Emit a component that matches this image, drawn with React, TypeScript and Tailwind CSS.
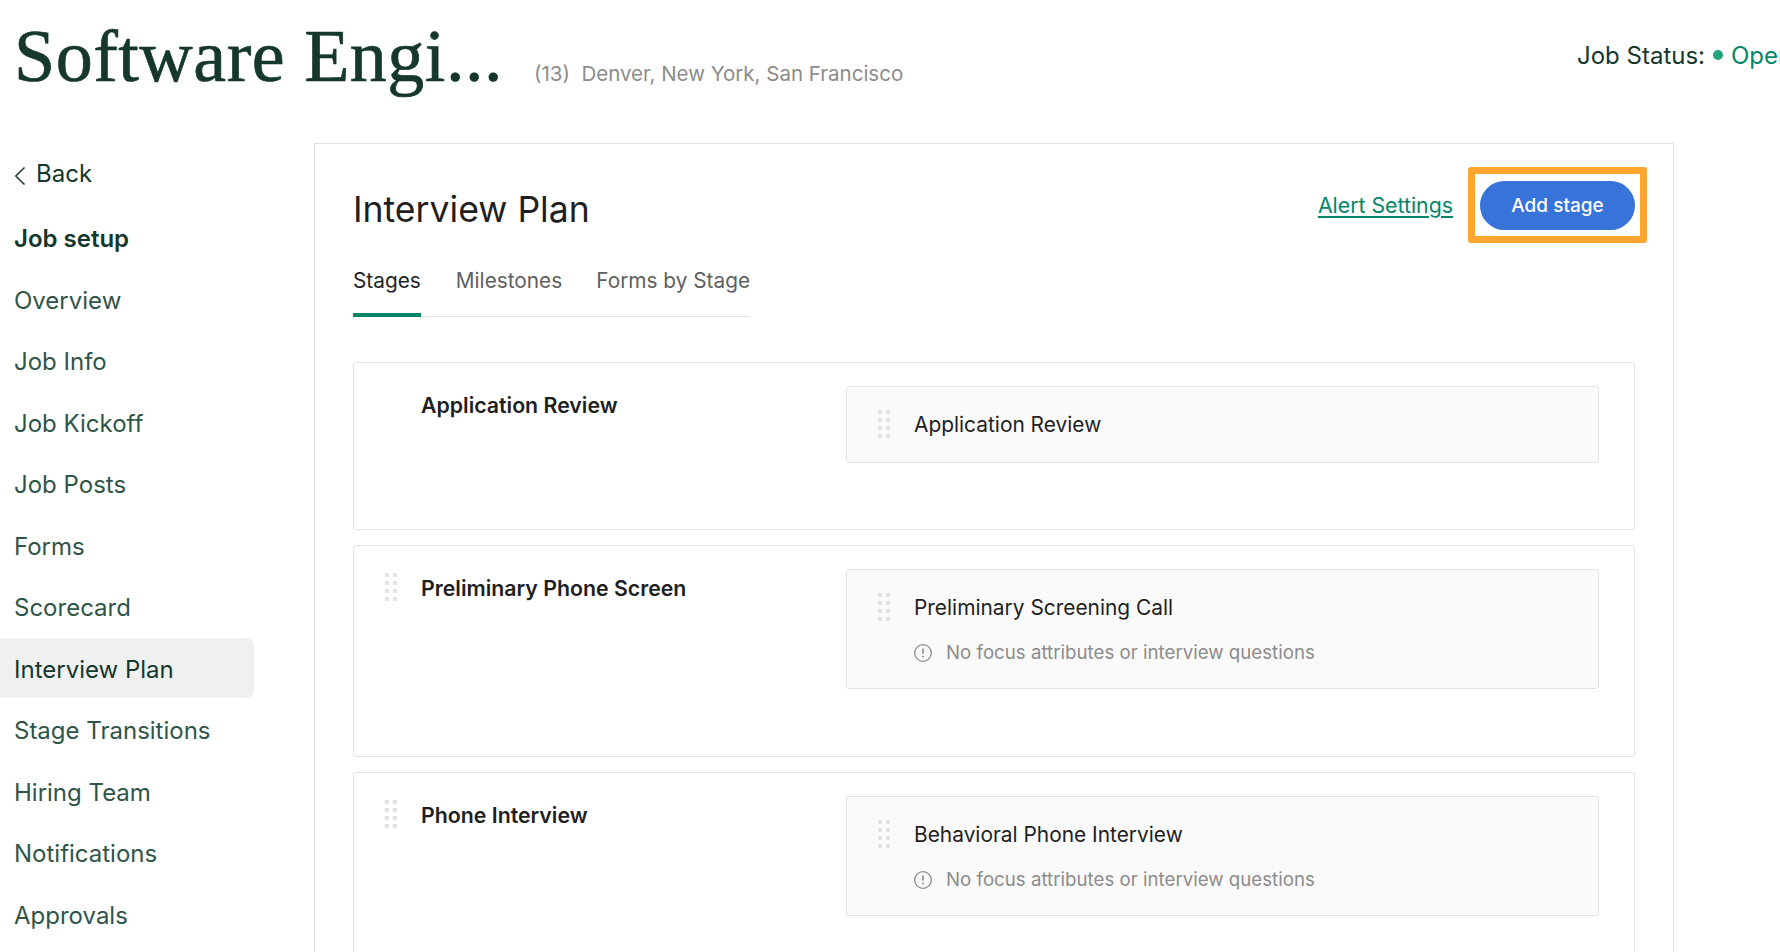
const sans = "font-['Inter',sans-serif]";

const nav = ["Overview", "Job Info", "Job Kickoff", "Job Posts", "Forms", "Scorecard", "Interview Plan", "Stage Transitions", "Hiring Team", "Notifications", "Approvals"];

function Grip({ className = "" }: { className?: string }) {
  return (
    <svg width="12" height="28" viewBox="0 0 12 28" className={`shrink-0 block ${className}`} fill="#e2e2e2">
      {[0, 8].map((x) => [0, 8, 16, 24].map((y) => <rect key={`${x}-${y}`} x={x} y={y} width="4" height="4" />))}
    </svg>
  );
}

function Warn() {
  return (
    <svg width="18" height="18" viewBox="0 0 18 18" fill="none" className="shrink-0">
      <circle cx="9" cy="9" r="8.3" stroke="#8c8c8c" strokeWidth="1.3" />
      <path d="M9 4.6v5.2" stroke="#8c8c8c" strokeWidth="1.6" />
      <circle cx="9" cy="12.6" r="1" fill="#8c8c8c" />
    </svg>
  );
}

function Stage({ title, sub, warn, grip, height, last }: { title: string; sub: string; warn?: boolean; grip?: boolean; height: string; last?: boolean }) {
  return (
    <div className={`flex pl-[31px] pr-[35px] pt-[23px] bg-white border border-[#e3e3e3] rounded-[3px] ${height} ${last ? "" : "mb-[15px]"}`}>
      <div className="w-[36px] shrink-0 pt-[4px]">{grip && <Grip />}</div>
      <div className="w-[425px] shrink-0 text-[21.3px] font-semibold text-[#1f1f1f] leading-[28px] h-[28px] mt-[5px] whitespace-nowrap">{title}</div>
      <div className="flex-1 h-fit">
        <div className={`bg-[#fafafa] border border-[#e3e3e3] rounded-[3px] pl-[31px] pt-[23px] ${warn ? "h-[120px]" : "h-[77px]"}`}>
          <div className="flex">
            <Grip />
            <div className="ml-[24px] text-[20.9px] text-[#1f1f1f] leading-[28px] mt-[1px]">{sub}</div>
          </div>
          {warn && (
            <div className="flex items-center ml-[36px] mt-[19px] h-[24px]">
              <Warn />
              <span className="ml-[14px] text-[18.7px] text-[#8c8c8c]">No focus attributes or interview questions</span>
            </div>
          )}
        </div>
      </div>
    </div>
  );
}

export default function App() {
  return (
    <div className={`${sans} w-full h-[952px] overflow-hidden bg-white`}>
      <header className="h-[143px] flex pl-[14px]">
        <h1 className="font-['Liberation_Serif',serif] text-[74px] leading-[88px] tracking-[0.5px] text-[#15372c] [-webkit-text-stroke:0.7px_#15372c] mt-[12px] h-[88px] whitespace-nowrap">Software Engi...</h1>
        <div className="ml-[31px] mt-[60px] text-[20.5px] leading-[28px] text-[#8c8c8c] whitespace-nowrap">(13)&nbsp; Denver, New York, San Francisco</div>
        <div className="ml-auto w-[203px] shrink-0 mt-[40px] h-[32px] flex items-center whitespace-nowrap text-[24px] text-[#15372c]">
          <span>Job Status:</span>
          <span className="ml-[8px] w-[10px] h-[10px] shrink-0 rounded-full bg-[#24a47f] -translate-y-[1px]" />
          <span className="ml-[8px] text-[#038667]">Open</span>
        </div>
      </header>
      <div className="flex">
        <nav className="w-[314px] shrink-0 pt-[1px] text-[24px]">
          <div className="h-[60px] flex items-center pl-[14px] text-[#15372c] mb-[3px]">
            <svg width="12" height="20" viewBox="0 0 12 20" fill="none" className="mt-[4px] mr-[10px]">
              <path d="M10.5 1.5 1.8 10l8.7 8.5" stroke="#15372c" strokeWidth="1.5" />
            </svg>
            Back
          </div>
          <div className="h-[60px] flex items-center pl-[14px] pt-[4px] font-semibold text-[#15372c] mb-[1.5px]">Job setup</div>
          {nav.map((n) => (
            <div key={n} className={`w-[254px] h-[60px] mb-[1.5px] flex items-center pl-[14px] pt-[4px] rounded-r-[8px] ${n === "Interview Plan" ? "bg-[#eff1f0] text-[#15372c]" : "text-[#2f5548]"}`}>{n}</div>
          ))}
        </nav>
        <main className="w-[1360px] shrink-0 h-[900px] border border-[#e0e0e0] pl-[38px] pr-[37px]">
          <div className="flex items-start h-[100px] pt-[23px]">
            <h2 className="text-[35.6px] leading-[44px] text-[#1f1f1f] mt-[21px]">Interview Plan</h2>
            <a className="ml-auto mt-[24px] text-[21.3px] leading-[28px] text-[#038667] underline underline-offset-[3px]">Alert Settings</a>
            <div className="ml-[15px] -mr-[11px] w-[179px] h-[76px] border-[7px] border-[#ffa630] rounded-[3px] p-[5px] pt-[7px] flex">
              <button className="w-[155px] h-[49px] pt-[2px] rounded-full bg-[#3773d9] text-white text-[19px] font-medium">Add stage</button>
            </div>
          </div>
          <div className="flex w-[397px] h-[73px] border-b border-[#e3e3e3] text-[20.8px] text-[#5f5f5f] leading-[28px] whitespace-nowrap">
            <div className="h-[73px] border-b-4 border-[#038667] text-[#1f1f1f] pt-[23px] w-[68px]">Stages</div>
            <div className="pt-[23px] ml-[35px]">Milestones</div>
            <div className="pt-[23px] ml-[34px]">Forms by Stage</div>
          </div>
          <div className="mt-[45px] w-[1282px]">
            <Stage title="Application Review" sub="Application Review" height="h-[168px]" />
            <Stage title="Preliminary Phone Screen" sub="Preliminary Screening Call" warn grip height="h-[212px]" />
            <Stage title="Phone Interview" sub="Behavioral Phone Interview" warn grip height="h-[300px]" last />
          </div>
        </main>
      </div>
    </div>
  );
}
